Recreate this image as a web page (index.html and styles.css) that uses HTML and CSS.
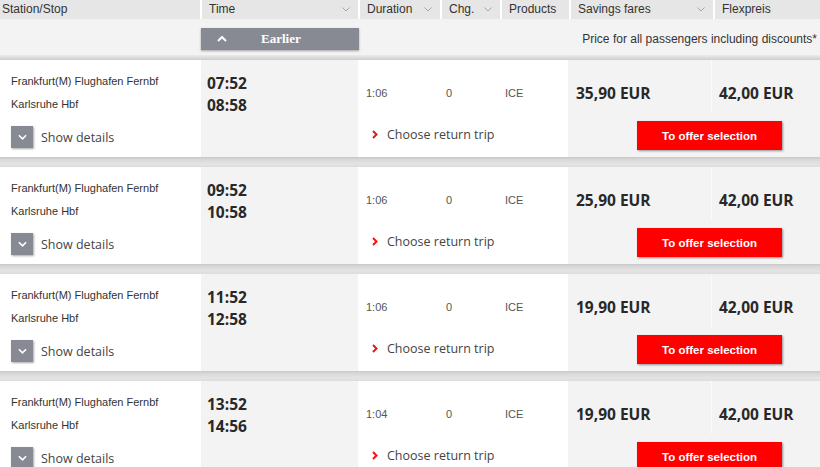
FILE: index.html
```html
<!DOCTYPE html>
<html lang="en">
<head>
<meta charset="utf-8">
<title>Connections</title>
<link rel="stylesheet" href="styles.css">
</head>
<body>
<div class="table">
  <div class="thead">
    <div class="hcell hcell-station">Station/Stop</div>
    <div class="hcell">Time<svg class="sort" viewBox="0 0 8 5"><polyline points="0.5,0.5 4,4 7.5,0.5"/></svg></div>
    <div class="hcell">Duration<svg class="sort" viewBox="0 0 8 5"><polyline points="0.5,0.5 4,4 7.5,0.5"/></svg></div>
    <div class="hcell">Chg.<svg class="sort" viewBox="0 0 8 5"><polyline points="0.5,0.5 4,4 7.5,0.5"/></svg></div>
    <div class="hcell">Products</div>
    <div class="hcell">Savings fares<svg class="sort" viewBox="0 0 8 5"><polyline points="0.5,0.5 4,4 7.5,0.5"/></svg></div>
    <div class="hcell">Flexpreis</div>
  </div>
  <div class="subhead">
    <div></div>
    <div class="earlier-wrap">
      <button class="earlier"><svg class="up" viewBox="0 0 10 6"><polyline points="1,5 5,1 9,5"/></svg><span>Earlier</span></button>
    </div>
    <div class="note">Price for all passengers including discounts*</div>
  </div>
  <div class="band band-first"></div>

  <div class="trip">
    <div class="c-station">
      <div class="stn">Frankfurt(M) Flughafen Fernbf</div>
      <div class="stn">Karlsruhe Hbf</div>
      <div class="details"><span class="dbox"><svg viewBox="0 0 10 6"><polyline points="1,1 5,5 9,1"/></svg></span>Show details</div>
    </div>
    <div class="c-time"><div>07:52</div><div>08:58</div></div>
    <div class="c-mid">
      <div class="facts"><span class="f-dur">1:06</span><span class="f-chg">0</span><span class="f-prod">ICE</span></div>
      <div class="ret"><svg viewBox="0 0 6 9"><polyline points="1,1 4.5,4.5 1,8"/></svg>Choose return trip</div>
    </div>
    <div class="c-price c-save">35,90 EUR</div>
    <div class="c-price c-flex">42,00 EUR</div>
    <div class="c-btn"><button class="offer">To offer selection</button></div>
  </div>
  <div class="band"></div>

  <div class="trip">
    <div class="c-station">
      <div class="stn">Frankfurt(M) Flughafen Fernbf</div>
      <div class="stn">Karlsruhe Hbf</div>
      <div class="details"><span class="dbox"><svg viewBox="0 0 10 6"><polyline points="1,1 5,5 9,1"/></svg></span>Show details</div>
    </div>
    <div class="c-time"><div>09:52</div><div>10:58</div></div>
    <div class="c-mid">
      <div class="facts"><span class="f-dur">1:06</span><span class="f-chg">0</span><span class="f-prod">ICE</span></div>
      <div class="ret"><svg viewBox="0 0 6 9"><polyline points="1,1 4.5,4.5 1,8"/></svg>Choose return trip</div>
    </div>
    <div class="c-price c-save">25,90 EUR</div>
    <div class="c-price c-flex">42,00 EUR</div>
    <div class="c-btn"><button class="offer">To offer selection</button></div>
  </div>
  <div class="band"></div>

  <div class="trip">
    <div class="c-station">
      <div class="stn">Frankfurt(M) Flughafen Fernbf</div>
      <div class="stn">Karlsruhe Hbf</div>
      <div class="details"><span class="dbox"><svg viewBox="0 0 10 6"><polyline points="1,1 5,5 9,1"/></svg></span>Show details</div>
    </div>
    <div class="c-time"><div>11:52</div><div>12:58</div></div>
    <div class="c-mid">
      <div class="facts"><span class="f-dur">1:06</span><span class="f-chg">0</span><span class="f-prod">ICE</span></div>
      <div class="ret"><svg viewBox="0 0 6 9"><polyline points="1,1 4.5,4.5 1,8"/></svg>Choose return trip</div>
    </div>
    <div class="c-price c-save">19,90 EUR</div>
    <div class="c-price c-flex">42,00 EUR</div>
    <div class="c-btn"><button class="offer">To offer selection</button></div>
  </div>
  <div class="band"></div>

  <div class="trip">
    <div class="c-station">
      <div class="stn">Frankfurt(M) Flughafen Fernbf</div>
      <div class="stn">Karlsruhe Hbf</div>
      <div class="details"><span class="dbox"><svg viewBox="0 0 10 6"><polyline points="1,1 5,5 9,1"/></svg></span>Show details</div>
    </div>
    <div class="c-time"><div>13:52</div><div>14:56</div></div>
    <div class="c-mid">
      <div class="facts"><span class="f-dur">1:04</span><span class="f-chg">0</span><span class="f-prod">ICE</span></div>
      <div class="ret"><svg viewBox="0 0 6 9"><polyline points="1,1 4.5,4.5 1,8"/></svg>Choose return trip</div>
    </div>
    <div class="c-price c-save">19,90 EUR</div>
    <div class="c-price c-flex">42,00 EUR</div>
    <div class="c-btn"><button class="offer">To offer selection</button></div>
  </div>
  <div class="band"></div>
</div>
</body>
</html>
```

FILE: styles.css
```css
* { box-sizing: border-box; }
html, body { margin: 0; padding: 0; }
body {
  width: 820px;
  height: 467px;
  overflow: hidden;
  background: #fff;
  font-family: "Liberation Sans", Arial, sans-serif;
  color: #333;
}
.table { width: 820px; }

.thead {
  display: grid;
  grid-template-columns: 200px 156px 80px 58px 67px 142px 105px;
  column-gap: 2px;
  background: #fff;
  height: 19px;
}
.hcell {
  background: #e6e6e6;
  font-size: 12px;
  line-height: 19px;
  padding-left: 7px;
  padding-right: 8px;
  display: flex;
  justify-content: space-between;
  align-items: center;
  color: #333;
}
.hcell-station { padding-left: 2px; }
.sort {
  width: 8px;
  height: 5px;
  fill: none;
  stroke: #a5a5a5;
  stroke-width: 1;
}

.subhead {
  display: grid;
  grid-template-columns: 201px 158px 1fr;
  height: 36px;
  background: #f3f3f3;
}
.earlier-wrap { padding-top: 9px; }
.earlier {
  width: 158px;
  height: 22px;
  border: 0;
  background: #878a93;
  box-shadow: 0 1px 2px rgba(0,0,0,0.35);
  color: #fff;
  font-family: "Liberation Serif", "Times New Roman", serif;
  font-weight: bold;
  font-size: 13px;
  display: flex;
  align-items: center;
  padding: 0 0 0 16px;
  cursor: pointer;
}
.earlier span { margin-left: 34px; }
.up {
  width: 10px;
  height: 6px;
  fill: none;
  stroke: #fff;
  stroke-width: 2;
}
.note {
  font-size: 12px;
  text-align: right;
  padding-right: 3px;
  line-height: 40px;
  color: #333;
}

.band {
  height: 10px;
  background: linear-gradient(#c8c8c8 0, #d8d8d8 25%, #e4e4e4 70%, #dcdcdc 100%);
}
.band-first {
  height: 5px;
  background: linear-gradient(#ebebeb 0, #d9d9d9 60%, #cfcfcf 100%);
}

.trip {
  display: grid;
  grid-template-columns: 201px 157px 210px 144px 108px;
  grid-template-rows: 53px 44px;
  height: 97px;
}
.c-station {
  grid-row: 1 / 3;
  grid-column: 1;
  background: #fff;
  padding: 10px 0 0 11px;
}
.stn {
  font-size: 11px;
  line-height: 23px;
  color: #333;
}
.details {
  margin-top: 10px;
  display: flex;
  align-items: center;
  font-family: "Open Sans", sans-serif;
  font-size: 12.5px;
  color: #444;
}
.dbox {
  width: 22px;
  height: 22px;
  background: #878a93;
  box-shadow: 1px 1px 2px rgba(0,0,0,0.35);
  display: flex;
  align-items: center;
  justify-content: center;
  margin-right: 8px;
}
.dbox svg {
  width: 9px;
  height: 6px;
  fill: none;
  stroke: #fff;
  stroke-width: 1.8;
}

.c-time {
  grid-row: 1 / 3;
  grid-column: 2;
  background: #f3f3f3;
  padding: 12px 0 0 6px;
  font-family: "Open Sans", sans-serif;
  font-weight: 700;
  font-size: 15.5px;
  line-height: 22px;
  color: #282828;
}

.c-mid {
  grid-row: 1 / 3;
  grid-column: 3;
  background: #fff;
  padding: 25px 0 0 8px;
}
.facts {
  display: flex;
  font-size: 11px;
  line-height: 16px;
  color: #555;
}
.f-dur { width: 80px; }
.f-chg { width: 59px; }
.ret {
  margin-top: 25px;
  display: flex;
  align-items: center;
  padding-left: 6px;
  font-family: "Open Sans", sans-serif;
  font-size: 12.5px;
  color: #444;
}
.ret svg {
  width: 6px;
  height: 9px;
  fill: none;
  stroke: #f01414;
  stroke-width: 2;
  margin-right: 9px;
}

.c-price {
  grid-row: 1;
  background: #f3f3f3;
  font-family: "Open Sans", sans-serif;
  font-weight: 700;
  font-size: 15.5px;
  color: #282828;
  padding: 22px 0 0 8px;
  line-height: 22px;
}
.c-save { grid-column: 4; border-right: 1px solid #fafafa; }
.c-flex { grid-column: 5; padding-left: 7px; }
.c-btn {
  grid-row: 2;
  grid-column: 4 / 6;
  background: #f3f3f3;
  padding: 8px 0 0 69px;
}
.offer {
  width: 145px;
  height: 29px;
  border: 0;
  background: #ff0000;
  color: #fff;
  font-family: "Liberation Sans", Arial, sans-serif;
  font-weight: bold;
  font-size: 11.5px;
  box-shadow: 1px 1px 2px rgba(0,0,0,0.4);
  padding: 0;
  cursor: pointer;
}
```
